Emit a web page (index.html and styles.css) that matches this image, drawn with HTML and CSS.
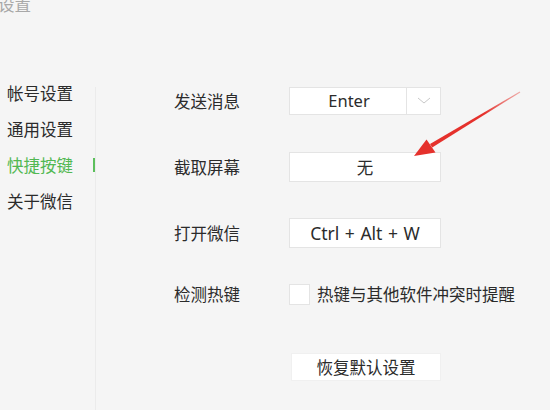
FILE: index.html
```html
<!DOCTYPE html>
<html lang="zh-CN">
<head>
<meta charset="utf-8">
<title>设置</title>
<link rel="stylesheet" href="styles.css">
</head>
<body>
<div class="window">
  <header class="titlebar">设置</header>
  <div class="main">
    <nav class="sidebar">
      <ul class="menu">
        <li class="menu-item">帐号设置</li>
        <li class="menu-item">通用设置</li>
        <li class="menu-item active">快捷按键</li>
        <li class="menu-item">关于微信</li>
      </ul>
    </nav>
    <section class="content">
      <div class="row row-1">
        <span class="label">发送消息</span>
        <div class="box select">
          <span class="select-value">Enter</span>
          <span class="select-arrow">
            <svg width="14" height="8" viewBox="0 0 14 8"><path d="M1 1 L7 6 L13 1" fill="none" stroke="#c8c8c8" stroke-width="1"/></svg>
          </span>
        </div>
      </div>
      <div class="row row-2">
        <span class="label">截取屏幕</span>
        <div class="box key tall cjk">无</div>
      </div>
      <div class="row row-3">
        <span class="label">打开微信</span>
        <div class="box key tall latin">Ctrl + Alt + W</div>
      </div>
      <div class="row row-4">
        <span class="label">检测热键</span>
        <span class="checkbox"></span>
        <span class="check-text">热键与其他软件冲突时提醒</span>
      </div>
      <div class="row row-5">
        <span class="label"></span>
        <button class="reset">恢复默认设置</button>
      </div>
    </section>
  </div>
  <svg class="annotation" width="550" height="410" viewBox="0 0 550 410">
    <defs>
      <linearGradient id="fade" x1="520" y1="92" x2="431" y2="146" gradientUnits="userSpaceOnUse">
        <stop offset="0" stop-color="#e8605a" stop-opacity="0.5"/>
        <stop offset="0.4" stop-color="#e5312c"/>
        <stop offset="1" stop-color="#e5312c"/>
      </linearGradient>
    </defs>
    <polygon points="520.3,92.4 519.7,91.6 430,144 432.2,147.6" fill="url(#fade)"/>
    <polygon points="414,156 426.5,139.5 435.5,152.5" fill="#e5312c"/>
  </svg>
</div>
</body>
</html>
```

FILE: styles.css
```css
* {
  box-sizing: border-box;
}

html, body {
  margin: 0;
  padding: 0;
  background: #f5f5f5;
}

body {
  font-family: "Noto Sans", "Noto Sans CJK SC", sans-serif;
  color: #2b2b2b;
  width: 550px;
  height: 410px;
  overflow: hidden;
}

.window {
  position: relative;
  width: 550px;
  height: 410px;
  overflow: hidden;
}

.titlebar {
  height: 87px;
  margin-left: -2px;
  margin-top: -6px;
  font-family: "Noto Sans CJK SC", sans-serif;
  font-size: 16.5px;
  line-height: 20px;
  color: #a8a8a8;
}

.main {
  display: flex;
  height: 330px;
  margin-top: 6px;
}

.sidebar {
  width: 96px;
  border-right: 1px solid #ebebeb;
  flex: none;
}

.menu {
  list-style: none;
  margin: -12px 0 0 0;
  padding: 0 0 0 7px;
}

.menu-item {
  position: relative;
  height: 36px;
  line-height: 36px;
  font-family: "Noto Sans CJK SC", sans-serif;
  font-size: 16.5px;
  color: #2b2b2b;
}

.menu-item.active {
  color: #52b852;
}

.menu-item.active::after {
  content: "";
  position: absolute;
  right: 0;
  top: 11px;
  width: 2px;
  height: 14px;
  background: #5cbf5c;
}

.content {
  flex: 1;
  padding-left: 78px;
}

.row {
  display: flex;
  align-items: center;
  height: 30px;
}

.row-1 { margin-top: -1px; }
.row-2 { margin-top: 36px; }
.row-3 { margin-top: 36px; }
.row-4 { margin-top: 31px; }
.row-5 { margin-top: 43px; }

.label {
  width: 115px;
  flex: none;
  font-family: "Noto Sans CJK SC", sans-serif;
  font-size: 16.5px;
  color: #2b2b2b;
}

.box {
  width: 152px;
  background: #fff;
  border: 1px solid #e4e4e4;
  font-size: 16.5px;
  color: #2b2b2b;
}

.select {
  display: flex;
  height: 28px;
}

.select-value {
  flex: 1;
  text-align: center;
  line-height: 26px;
  padding-left: 2px;
}

.select-arrow {
  width: 34px;
  border-left: 1px solid #e4e4e4;
  display: flex;
  align-items: center;
  justify-content: center;
}

.key {
  text-align: center;
}

.cjk {
  font-family: "Noto Sans CJK SC", sans-serif;
}

.latin {
  font-size: 17.5px;
  word-spacing: 1px;
}

.tall {
  height: 30px;
  line-height: 28px;
}

.checkbox {
  width: 21px;
  height: 21px;
  background: #fff;
  border: 1px solid #e4e4e4;
  flex: none;
}

.check-text {
  margin-left: 7px;
  font-family: "Noto Sans CJK SC", sans-serif;
  font-size: 16.5px;
  color: #2b2b2b;
}

.reset {
  margin-left: 2px;
  width: 150px;
  height: 28px;
  background: #fff;
  border: 1px solid #f0f0f0;
  font-family: "Noto Sans CJK SC", sans-serif;
  font-size: 16.5px;
  color: #2b2b2b;
  padding: 0;
}

.annotation {
  position: absolute;
  left: 0;
  top: 0;
  pointer-events: none;
}
```
